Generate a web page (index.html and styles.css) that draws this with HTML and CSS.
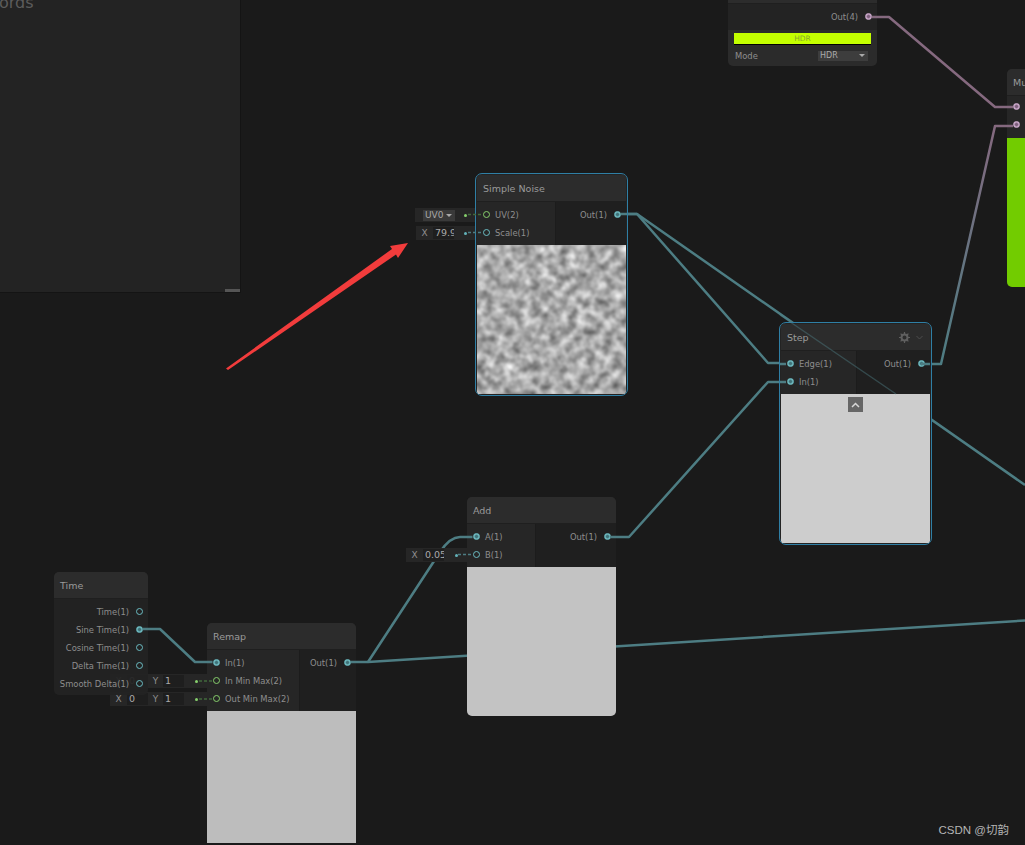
FILE: index.html
```html
<!DOCTYPE html>
<html lang="en">
<head>
    <meta charset="UTF-8">
    <title>Shader Graph</title>
    <link rel="stylesheet" href="styles.css">
</head>
<body>
    <main class="canvas">
        <section class="group">
            <div class="group-title">ords</div>
            <div class="group-handle"></div>
        </section>

        <!-- wires run under the nodes -->
        <svg class="wires" width="1025" height="845" viewBox="0 0 1025 845">
            <defs>
                <linearGradient id="wire-mix" gradientUnits="userSpaceOnUse" x1="0" y1="126" x2="0" y2="364">
                    <stop offset="0" stop-color="#85697f"/>
                    <stop offset="1" stop-color="#4d7d83"/>
                </linearGradient>
            </defs>
            <path class="wire wire-purple" d="M877 17H889L995 107H1007"/>
            <path class="wire wire-mix" d="M930 364H941L995 126H1007"/>
            <path class="wire" d="M627 214H637L768 363H780"/>
            <path class="wire" d="M627 214H637L1025 485"/>
            <path class="wire" d="M616 537H629L768 382H780"/>
            <path class="wire" d="M356 662H368L1025 620.5"/>
            <path class="wire" d="M368 662L440 552Q450 537 460 537H467"/>
            <path class="wire" d="M148 629H160L195 662H207"/>
        </svg>

        <div class="stub stub-uv">
            <span class="stub-select">UV0 <i class="caret"></i></span>
            <i class="stub-dot dot-green"></i>
        </div>
        <div class="stub stub-scale">
            <span class="stub-label">X</span>
            <span class="stub-field">79.9</span>
            <i class="stub-dot dot-teal"></i>
        </div>
        <div class="stub stub-add">
            <span class="stub-label">X</span>
            <span class="stub-field">0.05</span>
            <i class="stub-dot dot-teal"></i>
        </div>
        <div class="stub stub-min">
            <span class="stub-label">X</span>
            <span class="stub-field">0</span>
            <span class="stub-label label-y">Y</span>
            <span class="stub-field">1</span>
            <i class="stub-dot dot-green"></i>
        </div>
        <div class="stub stub-max">
            <span class="stub-label">X</span>
            <span class="stub-field">0</span>
            <span class="stub-label label-y">Y</span>
            <span class="stub-field">1</span>
            <i class="stub-dot dot-green"></i>
        </div>

        <article class="node node-color">
            <div class="node-title"></div>
            <div class="ports">
                <div class="port-col port-out">
                    <div class="port">Out(4) <i class="pin pin-purple on"></i></div>
                </div>
            </div>
            <div class="color-body">
                <div class="color-bar">HDR</div>
                <div class="mode-row">
                    <span>Mode</span>
                    <span class="mode-select">HDR <i class="caret"></i></span>
                </div>
            </div>
        </article>

        <article class="node node-multiply">
            <div class="node-title">Multiply</div>
            <div class="ports">
                <div class="port-col port-in">
                    <div class="port"><i class="pin pin-purple on"></i></div>
                    <div class="port"><i class="pin pin-purple on"></i></div>
                </div>
            </div>
            <div class="preview preview-green"></div>
        </article>

        <article class="node node-noise selected">
            <div class="node-title">Simple Noise</div>
            <div class="ports">
                <div class="port-col port-in">
                    <div class="port"><i class="pin pin-green"></i> UV(2)</div>
                    <div class="port"><i class="pin pin-teal"></i> Scale(1)</div>
                </div>
                <div class="port-col port-out">
                    <div class="port">Out(1) <i class="pin pin-teal on"></i></div>
                </div>
            </div>
            <svg class="preview noise" width="149" height="149" viewBox="0 0 149 149">
                <filter id="noise-grey" x="-10%" y="-10%" width="120%" height="120%" color-interpolation-filters="sRGB">
                    <feTurbulence type="fractalNoise" baseFrequency="0.11" numOctaves="3" seed="7"/>
                    <feColorMatrix type="matrix" values="0.85 0 0 0 0.24  0.85 0 0 0 0.24  0.85 0 0 0 0.24  0 0 0 0 1"/>
                    <feGaussianBlur stdDeviation="0.8"/>
                </filter>
                <rect width="149" height="149" filter="url(#noise-grey)"/>
            </svg>
        </article>

        <article class="node node-step selected">
            <div class="node-title">
                Step
                <span class="title-icons">
                    <svg width="11" height="11" viewBox="0 0 11 11">
                        <circle cx="5.5" cy="5.5" r="3" fill="none" stroke="#5f5f5f" stroke-width="2"/>
                        <path d="M5.5 0V2M5.5 9V11M0 5.5H2M9 5.5H11M1.6 1.6L3 3M8 8L9.4 9.4M1.6 9.4L3 8M8 3L9.4 1.6" stroke="#5f5f5f" stroke-width="1.2"/>
                    </svg>
                    <svg width="7" height="5" viewBox="0 0 7 5">
                        <path d="M.5 1L3.5 4L6.5 1" fill="none" stroke="#4d4d4d"/>
                    </svg>
                </span>
            </div>
            <div class="ports">
                <div class="port-col port-in">
                    <div class="port"><i class="pin pin-teal on"></i> Edge(1)</div>
                    <div class="port"><i class="pin pin-teal on"></i> In(1)</div>
                </div>
                <div class="port-col port-out">
                    <div class="port">Out(1) <i class="pin pin-teal on"></i></div>
                </div>
            </div>
            <div class="preview preview-step">
                <span class="collapse">
                    <svg width="9" height="6" viewBox="0 0 9 6">
                        <path d="M1 5L4.500 1.500L8 5" fill="none" stroke="#d8d8d8" stroke-width="1.500"/>
                    </svg>
                </span>
            </div>
        </article>

        <article class="node node-add">
            <div class="node-title">Add</div>
            <div class="ports">
                <div class="port-col port-in">
                    <div class="port"><i class="pin pin-teal on"></i> A(1)</div>
                    <div class="port"><i class="pin pin-teal"></i> B(1)</div>
                </div>
                <div class="port-col port-out">
                    <div class="port">Out(1) <i class="pin pin-teal on"></i></div>
                </div>
            </div>
            <div class="preview preview-add"></div>
        </article>

        <article class="node node-remap">
            <div class="node-title">Remap</div>
            <div class="ports">
                <div class="port-col port-in">
                    <div class="port"><i class="pin pin-teal on"></i> In(1)</div>
                    <div class="port"><i class="pin pin-green"></i> In Min Max(2)</div>
                    <div class="port"><i class="pin pin-green"></i> Out Min Max(2)</div>
                </div>
                <div class="port-col port-out">
                    <div class="port">Out(1) <i class="pin pin-teal on"></i></div>
                </div>
            </div>
            <div class="preview preview-remap"></div>
        </article>

        <article class="node node-time">
            <div class="node-title">Time</div>
            <div class="ports">
                <div class="port-col port-out">
                    <div class="port">Time(1) <i class="pin pin-teal"></i></div>
                    <div class="port">Sine Time(1) <i class="pin pin-teal on"></i></div>
                    <div class="port">Cosine Time(1) <i class="pin pin-teal"></i></div>
                    <div class="port">Delta Time(1) <i class="pin pin-teal"></i></div>
                    <div class="port">Smooth Delta(1) <i class="pin pin-teal"></i></div>
                </div>
            </div>
        </article>

        <!-- bits of wire that show on top of a node, and the arrow drawn on the screenshot -->
        <svg class="wires wires-top" width="1025" height="845" viewBox="0 0 1025 845">
            <path class="wire wire-faint" d="M780 315L896 394"/>
            <path class="wire wire-thin wire-green" d="M468 214.500H483"/>
            <path class="wire wire-thin" d="M468 232.500H483"/>
            <path class="wire wire-thin" d="M458 554.500H473"/>
            <path class="wire wire-thin wire-green" d="M199 681H213"/>
            <path class="wire wire-thin wire-green" d="M199 699H213"/>
            <path class="wire" d="M207 662H212.500M616 537H610M467 537H472.500M780 364H786M780 382H786M930 364H921M627 214H621M356 662H351M148 629H143"/>
            <path class="wire wire-purple" d="M877 17H872M1007 107H1013M1007 126H1013"/>
            <polygon class="arrow" points="226,368.500 392,249 390,246 408,243 398,258 396,254.500 228,370"/>
        </svg>

        <div class="watermark">CSDN @切韵</div>
    </main>
</body>
</html>
```

FILE: styles.css
```css
/* Basic styling */
html, body {
    margin: 0;
    padding: 0;
    height: 100%;
    background-color: #1a1a1a;
    font-family: "DejaVu Sans", sans-serif;
    overflow: hidden;
}
.canvas {
    position: relative;
    width: 1025px;
    height: 845px;
    overflow: hidden;
    background-color: #1a1a1a;
    color: #8e8e8e;
    font-size: 8.400px;
}

/* group panel at the top left */
.group {
    position: absolute;
    left: -4px;
    top: -30px;
    width: 245px;
    height: 323px;
    box-sizing: border-box;
    background-color: #232323;
    border-right: 1px solid #141414;
    border-bottom: 1px solid #141414;
}
.group-title {
    position: absolute;
    left: 3px;
    top: 24px;
    font-size: 16px;
    line-height: 18px;
    color: #5c5c5c;
}
.group-handle {
    position: absolute;
    right: 0;
    bottom: 0;
    width: 15px;
    height: 3px;
    background-color: #555;
}

/* wires */
.wires {
    position: absolute;
    left: 0;
    top: 0;
}
.wires-top {
    z-index: 5;
    pointer-events: none;
}
.wire {
    fill: none;
    stroke: #4d7d83;
    stroke-width: 2.500;
    stroke-linejoin: round;
}
.wire-purple {
    stroke: #85697f;
}
.wire-mix {
    stroke: url(#wire-mix);
}
.wire-thin {
    stroke-width: 1.500;
    stroke-dasharray: 3 2;
}
.wire-green {
    stroke: #42693c;
}
.wire-faint {
    stroke-width: 1.500;
    opacity: 0.45;
}
.arrow {
    fill: #f23c3c;
}

/* nodes */
.node {
    position: absolute;
    z-index: 3;
    display: flex;
    flex-direction: column;
    box-sizing: border-box;
    width: 149px;
    background-color: #232323;
    border-radius: 5px;
    overflow: hidden;
}
.node.selected {
    width: 153px;
    border: 1px solid #2f7fa5;
    border-radius: 7px;
    padding: 1px;
}
.node-title {
    flex: none;
    display: flex;
    align-items: center;
    justify-content: space-between;
    box-sizing: border-box;
    height: 27px;
    padding: 0 6px;
    background-color: #2c2c2c;
    font-size: 9.500px;
    color: #9a9a9a;
    border-bottom: 1px solid #1f1f1f;
}
.title-icons {
    display: flex;
    align-items: center;
    gap: 6px;
    margin-right: 1px;
}
.ports {
    flex: none;
    display: flex;
    background-color: #1f1f1f;
}
.port-col {
    padding: 4px 0 3px;
}
.port-in {
    background-color: #262626;
    border-right: 1px solid #1c1c1c;
}
.port-out {
    flex: 1;
}
.port {
    display: flex;
    align-items: center;
    gap: 5px;
    height: 18px;
    white-space: nowrap;
}
.port-in .port {
    padding: 0 10px 0 6px;
}
.port-out .port {
    justify-content: flex-end;
    padding: 0 5px 0 0;
}
.pin {
    flex: none;
    box-sizing: border-box;
    width: 7px;
    height: 7px;
    margin-top: -1px;
    border: 1.500px solid #63b3ba;
    border-radius: 50%;
}
.port-out .pin {
    margin-left: 2px;
}
.pin-teal {
    border-color: #6bbcc2;
}
.pin-green {
    border-color: #86cf6c;
}
.pin-purple {
    border-color: #cfaccf;
}
.pin.on {
    background: radial-gradient(circle, #3f7379 30%, #79c4ca 75%);
}
.pin-purple.on {
    background: radial-gradient(circle, #7d5f7c 30%, #d0afd0 75%);
}

/* previews */
.preview {
    display: block;
    flex: none;
}
.preview-green {
    height: 149px;
    background-color: #72cc00;
}
.preview-step {
    display: flex;
    justify-content: center;
    height: 149px;
    padding-top: 3px;
    box-sizing: border-box;
    background-color: #cdcdcd;
}
.preview-add {
    height: 149px;
    background-color: #c3c3c3;
}
.preview-remap {
    height: 132px;
    background-color: #bdbdbd;
}
.collapse {
    display: flex;
    align-items: center;
    justify-content: center;
    width: 15px;
    height: 15px;
    background-color: #666;
}

/* node places on the canvas */
.node-color {
    left: 728px;
    top: -23px;
    height: 89px;
    background-color: #2b2b2b;
}
.node-color .ports {
    background-color: #232323;
    height: 26px;
}
.node-color .port-col {
    padding: 4px 0 0;
}
.color-body {
    padding: 3px 6px 0;
}
.color-bar {
    height: 11px;
    line-height: 11px;
    background-color: #c4ff00;
    border-bottom: 1px solid #000;
    text-align: center;
    font-size: 7.500px;
    color: #8aa82c;
}
.mode-row {
    display: flex;
    align-items: center;
    justify-content: space-between;
    height: 15px;
    margin-top: 3px;
    padding: 0 3px 0 1px;
}
.mode-select {
    display: flex;
    align-items: center;
    justify-content: space-between;
    box-sizing: border-box;
    width: 50px;
    height: 10px;
    padding: 0 3px 0 2px;
    background-color: #3d3d3d;
    font-size: 8px;
    color: #aaa;
}
.caret {
    display: inline-block;
    width: 0;
    height: 0;
    border-left: 3px solid transparent;
    border-right: 3px solid transparent;
    border-top: 3px solid #aaa;
}
.node-multiply {
    left: 1007px;
    top: 69px;
}
.node-multiply .port-col {
    flex: 1;
    padding: 2px 0 4px;
}
.node-noise {
    left: 475px;
    top: 173px;
}
.node-noise .port-in {
    width: 78px;
}
.node-step {
    left: 779px;
    top: 322px;
}
.node-step .port-in {
    width: 75px;
}
.node-add {
    left: 467px;
    top: 497px;
}
.node-add .port-in {
    width: 68px;
}
.node-remap {
    left: 207px;
    top: 623px;
    border-radius: 5px 5px 0 0;
}
.node-remap .port-in {
    width: 92px;
}
.node-time {
    left: 54px;
    top: 572px;
    width: 94px;
    height: 123px;
    background-color: rgba(35, 35, 35, 0.94);
}
.node-time .ports {
    background-color: transparent;
}
.node-time .port-col {
    padding-top: 4px;
}

/* default value stubs left of a node */
.stub {
    position: absolute;
    z-index: 2;
    display: flex;
    align-items: center;
    box-sizing: border-box;
    height: 14px;
    background-color: #262626;
    color: #8f8f8f;
    font-size: 9px;
}
.stub-uv {
    left: 415px;
    top: 208px;
    width: 61px;
    padding-left: 8px;
}
.stub-scale {
    left: 416px;
    top: 226px;
    width: 60px;
}
.stub-add {
    left: 406px;
    top: 548px;
    width: 61px;
}
.stub-min {
    left: 110px;
    top: 674px;
    width: 97px;
}
.stub-max {
    left: 110px;
    top: 692px;
    width: 97px;
}
.stub-select {
    display: flex;
    align-items: center;
    gap: 3px;
    height: 11px;
    padding: 0 3px 0 2px;
    background-color: #3a3a3a;
    color: #a8a8a8;
}
.stub-label {
    flex: none;
    width: 17px;
    text-align: center;
}
.label-y {
    width: 15px;
}
.stub-field {
    flex: none;
    width: 21px;
    height: 12px;
    line-height: 12px;
    overflow: hidden;
    padding-left: 2px;
    box-sizing: border-box;
    background-color: #1e1e1e;
    color: #aaa;
    font-size: 9.500px;
    white-space: nowrap;
}
.stub-dot {
    width: 3px;
    height: 3px;
    margin-left: auto;
    margin-right: 9px;
    border-radius: 50%;
}
.dot-green {
    background-color: #86cf6c;
}
.dot-teal {
    background-color: #63b3ba;
}

.watermark {
    position: absolute;
    z-index: 6;
    right: 16px;
    top: 821px;
    font-family: "Liberation Sans", "Noto Sans CJK SC", sans-serif;
    font-size: 11.500px;
    color: #b5b5b5;
}
```
